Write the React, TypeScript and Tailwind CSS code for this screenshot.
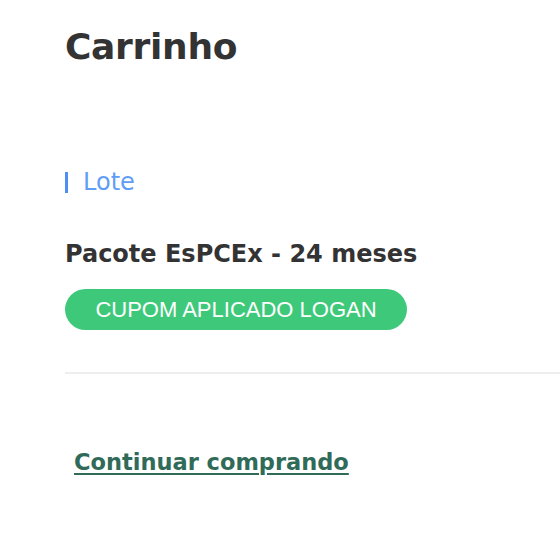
export default function App() {
  return (
    <div className="w-[560px] h-[560px] bg-white overflow-hidden" style={{ fontFamily: "'DejaVu Sans', 'Open Sans', sans-serif" }}>
      <div className="pl-[65px] pt-[23px]">
        <h1 className="text-[36px] leading-[48px] font-bold text-[#333333] tracking-[-0.3px]">Carrinho</h1>
        <div className="mt-[99px] flex items-center gap-[15px] h-[24px]">
          <div className="w-[3px] h-[21px] bg-[#4f8ef7]" />
          <span className="text-[24px] leading-[24px] text-[#5f9df7]">Lote</span>
        </div>
        <div className="mt-[46px] text-[24px] leading-[28px] font-bold text-[#333333]">Pacote EsPCEx - 24 meses</div>
        <div className="mt-[21px] w-[342px] h-[41px] rounded-full bg-[#3ec97a] flex items-center justify-center">
          <span className="text-white text-[22px]" style={{ fontFamily: "'Liberation Sans', Arial, sans-serif" }}>CUPOM APLICADO LOGAN</span>
        </div>
        <div className="mt-[42px] h-[2px] bg-[#eeeeee]" />
        <div className="mt-[73px] pl-[9px] text-[22.5px] leading-[30px]">
          <a href="#" className="font-bold text-[#2f6b58] underline underline-offset-[3px] decoration-2">Continuar comprando</a>
        </div>
      </div>
    </div>
  );
}
